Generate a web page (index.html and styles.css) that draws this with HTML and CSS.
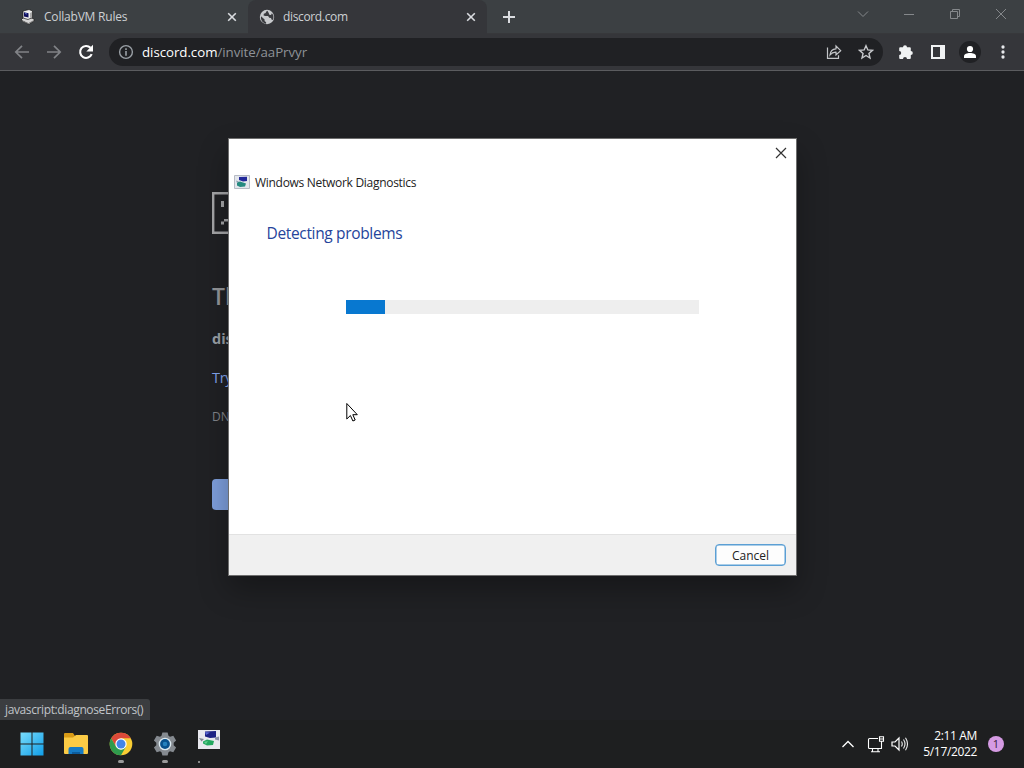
FILE: index.html
```html
<!DOCTYPE html>
<html lang="en">
<head>
<meta charset="utf-8">
<title>discord.com</title>
<link rel="stylesheet" href="styles.css">
</head>
<body>
<div class="desktop">
  <header class="tabstrip">
    <div class="tab tab-rules">
      <svg class="favicon" width="16" height="16" viewBox="0 0 16 16"><path d="M1 11l3-3 8 1 3 2-6 4.500z" fill="#d5d5d5" stroke="#111" stroke-width=".7"/><path d="M2.500 12l6 2.500L14 11.500" fill="none" stroke="#777"/><path d="M3 2l6-1.500L12.500 2v6.500L8 10.500 3 9z" fill="#eee" stroke="#181818" stroke-width=".7"/><path d="M4 3.300l4.500.9v4.300L4 7.500z" fill="#10105c"/><path d="M5 4l2 .5v1L5 5z" fill="#5c6ed0"/><path d="M10 4v5l2-1V3z" fill="#aaa"/></svg>
      <span class="tab-title t-rules">CollabVM Rules</span>
      <svg class="tab-close" width="10" height="10" viewBox="0 0 10 10"><path d="M1.200 1.200l7.600 7.600M8.800 1.200L1.200 8.800" stroke="#dadce0" stroke-width="1.600"/></svg>
    </div>
    <div class="tab tab-active">
      <svg class="favicon" width="16" height="16" viewBox="0 0 16 16"><circle cx="8" cy="8" r="7.200" fill="#c8cacd"/><path d="M2 7.200l3.600 3.400v1.300l1.500 1.300v1.500C3.600 14 1.400 11 2 7.200zM8.400 1.800c-1 .6-1.800 1-1.600 2.200l-2 .8-.2 1.700 1.700.5h2.800l1.100 1.800 1.800.2.500 1.400 1.400.5c1-2.200.8-4.700-1-6.600l-.9 1.600-1.700-.2-.6-1.700z" fill="#3a3b3f"/></svg>
      <span class="tab-title t-discord">discord.com</span>
      <svg class="tab-close" width="10" height="10" viewBox="0 0 10 10"><path d="M1.200 1.200l7.600 7.600M8.800 1.200L1.200 8.800" stroke="#dadce0" stroke-width="1.600"/></svg>
    </div>
    <svg class="new-tab" width="12" height="12" viewBox="0 0 12 12"><path d="M6 0v12M0 6h12" stroke="#dadce0" stroke-width="2"/></svg>
    <div class="caption">
      <svg width="12" height="12" viewBox="0 0 12 12"><path d="M1 3.500l5 5 5-5" fill="none" stroke="#85888b"/></svg>
      <svg width="12" height="12" viewBox="0 0 12 12"><path d="M1 6.500h10" stroke="#85888b"/></svg>
      <svg width="12" height="12" viewBox="0 0 12 12"><path d="M1.500 3.500h7v7h-7zM3.500 3.500v-2h7v7h-2" fill="none" stroke="#85888b"/></svg>
      <svg width="12" height="12" viewBox="0 0 12 12"><path d="M1 1l10 10M11 1L1 11" stroke="#85888b"/></svg>
    </div>
  </header>
  <nav class="toolbar">
    <svg class="nav-icon" width="16" height="16" viewBox="0 0 16 16"><path d="M15 8H2M8 1.800L1.800 8 8 14.200" fill="none" stroke="#818387" stroke-width="1.700"/></svg>
    <svg class="nav-icon" width="16" height="16" viewBox="0 0 16 16"><path d="M1 8h13M8 1.800L14.200 8 8 14.200" fill="none" stroke="#818387" stroke-width="1.700"/></svg>
    <svg class="nav-icon" width="16" height="16" viewBox="0 0 16 16"><path d="M13.700 10.200A6 6 0 1 1 12.500 3.800" fill="none" stroke="#fff" stroke-width="2.100"/><path d="M15 .8v6.700H8.300z" fill="#fff"/></svg>
    <div class="omnibox">
      <svg class="info" width="16" height="16" viewBox="0 0 16 16"><circle cx="8" cy="8" r="6.400" fill="none" stroke="#9aa0a6" stroke-width="1.400"/><path d="M8 4.200v1.700M8 7v4.800" stroke="#9aa0a6" stroke-width="1.600"/></svg>
      <span class="url"><span class="host">discord.com</span><span class="path">/invite/aaPrvyr</span></span>
      <svg class="share" width="16" height="16" viewBox="0 0 16 16"><path d="M1.500 3.500v10.800h11v-3" fill="none" stroke="#c3c5c8" stroke-width="1.200"/><path d="M4 11c.4-4 2.400-6 6-6.200V2l4.700 4.700L10 11V8.200C7.400 8 5.600 9 4 11z" fill="none" stroke="#c3c5c8" stroke-width="1.200"/></svg>
      <svg class="star" width="16" height="16" viewBox="0 0 16 16"><path d="M8 1.700l1.850 4.250 4.600.4-3.500 3.050L12 14 8 11.500 4 14l1.050-4.600-3.500-3.050 4.600-.4z" fill="none" stroke="#c8cacd" stroke-width="1.400"/></svg>
    </div>
    <svg class="puzzle" width="16" height="16" viewBox="0 0 16 16"><path d="M2.200 3.300H5a2 2 0 1 1 4 0h2.800q1 0 1 1v2.800a2 2 0 1 1 0 4v2.900q0 1-1 1H9a2 2 0 1 0-4 0H2.200q-1 0-1-1V11a2 2 0 1 0 0-4V4.300q0-1 1-1z" fill="#f1f3f4"/></svg>
    <svg class="panel" width="14" height="14" viewBox="0 0 14 14"><path fill-rule="evenodd" d="M0 0h14v14H0zM2 2v10h7V2z" fill="#f1f3f4"/></svg>
    <svg class="profile" width="22" height="22" viewBox="0 0 22 22"><circle cx="11" cy="11" r="11" fill="#202124"/><circle cx="11" cy="8" r="3.100" fill="#fff"/><path d="M5 17v-1.800c0-2.200 3-3.200 6-3.200s6 1 6 3.200V17z" fill="#fff"/></svg>
    <svg class="menu" width="4" height="14" viewBox="0 0 4 14"><g fill="#e8eaed"><circle cx="2" cy="2" r="1.650"/><circle cx="2" cy="7" r="1.650"/><circle cx="2" cy="12" r="1.650"/></g></svg>
  </nav>
  <main class="page">
    <div class="error">
      <svg class="sad" width="42" height="42" viewBox="0 0 42 42"><path d="M42 1.200H1.200v39.600H42" fill="none" stroke="#a5a6a8" stroke-width="2.400"/><path d="M9 9h3v6H9zM12 27h5v2.500h-5zM9 29.500h3v3H9z" fill="#a5a6a8"/></svg>
      <h1>Th</h1>
      <p class="host-line">dis</p>
      <p class="try">Try</p>
      <p class="code">DN</p>
      <div class="reload"></div>
    </div>
    <div class="status"><span>javascript:diagnoseErrors()</span></div>
  </main>
  <footer class="taskbar">
    <div class="apps">
      <div class="app"><svg width="24" height="24" viewBox="0 0 24 24"><defs><linearGradient id="win" x1="0" y1="0" x2="1" y2="1"><stop offset="0" stop-color="#79dcfb"/><stop offset="1" stop-color="#109ee8"/></linearGradient></defs><path d="M.5.500h11v11H.5zM12.500.500h11v11h-11zM.5 12.500h11v11H.5zM12.500 12.500h11v11h-11z" fill="url(#win)"/></svg></div>
      <div class="app"><svg width="26" height="24" viewBox="0 0 26 24"><path d="M1 2q0-1 1-1h8l2 3h12q1 0 1 1v5H1z" fill="#d99b16"/><path d="M1 5.500h9l3-2.500h11q1 0 1 1v17q0 1-1 1H2q-1 0-1-1z" fill="#fbcb45"/><path d="M5.500 22v-5q0-2 2-2h11q2 0 2 2v5z" fill="#167bc5"/><path d="M9 22v-2h8v2" fill="#0d5c9c"/></svg></div>
      <div class="app"><svg width="24" height="24" viewBox="0 0 24 24"><circle cx="12" cy="12" r="11.300" fill="#f9cd33"/><path d="M2.200 6.350A11.300 11.300 0 0 1 21.800 6.350H12L7.100 14.800z" fill="#dc4939"/><path d="M2.200 6.350A11.300 11.300 0 0 0 12 23.300L16.900 14.800 12 17.500 7.100 14.800z" fill="#2f9b4d"/><circle cx="12" cy="12" r="5.700" fill="#fff"/><circle cx="12" cy="12" r="4.500" fill="#4285e8"/></svg><i class="pill"></i></div>
      <div class="app"><svg width="24" height="24" viewBox="0 0 24 24"><path d="M8.500 3.800L9.400.500h5.200l.9 3.300 1.500.9 3.300-.9 2.800 4.600-2.400 2.400v2.400l2.400 2.400-2.800 4.600-3.300-.9-1.500.9-.9 3.300H9.400l-.9-3.300-1.500-.9-3.300.9-2.800-4.600 2.400-2.400v-2.400L.9 8.400l2.800-4.600 3.300.9z" fill="#858a90"/><circle cx="12" cy="12" r="6.300" fill="#dce9f0"/><circle cx="12" cy="12" r="4.900" fill="#07518d"/><circle cx="12" cy="12" r="2.300" fill="#2481bd"/></svg><i class="pill"></i></div>
      <div class="app app-diag"><svg width="22" height="19" viewBox="0 0 22 19"><path d="M0 0h22v19H0z" fill="#e8e8ee"/><path d="M7 1.500L18 1v6.500L12 8 7 6.500z" fill="#1d2184"/><path d="M7 2l5 .5L8 5z" fill="#5866cf"/><path d="M17 7.500l4-1v4l-4-1z" fill="#8b90a8"/><path d="M5 11.500l4-2 7 1.500-1 4-6 .5-4-2z" fill="#24a860"/><path d="M6 12l4-1-2 3z" fill="#65cf91"/><path d="M1 8l5 1-2.500 2.500z" fill="#7e858f"/></svg><i class="dot"></i></div>
    </div>
    <div class="tray">
      <svg class="chev" width="14" height="8" viewBox="0 0 14 8"><path d="M1.500 7L7 1.500 12.500 7" fill="none" stroke="#fff" stroke-width="1.300"/></svg>
      <svg class="net" width="18" height="17" viewBox="0 0 18 17"><path d="M11 2.500H2.500q-1 0-1 1v8q0 1 1 1H14.500V6M5.500 12.500v3M11 12.500v3M4 15.700h9M12.500.8h4v4.500h-4zM14.500 5.500v7M13 3h3" fill="none" stroke="#fff" stroke-width="1.100"/></svg>
      <svg class="sound" width="18" height="16" viewBox="0 0 18 16"><path d="M1 6h3l4-4v12l-4-4H1z" fill="none" stroke="#fff" stroke-width="1.200"/><path d="M10.500 5.500q1.500 2.500 0 5M12.500 3.500q3 4.500 0 9M14.500 1.700q4 6.300 0 12.600" fill="none" stroke="#eee" stroke-width="1.100"/></svg>
      <div class="clock"><span class="time">2:11 AM</span><span class="date">5/17/2022</span></div>
      <span class="badge">1</span>
    </div>
  </footer>

  <section class="dialog">
    <div class="dialog-body">
      <svg class="dialog-close" width="12" height="12" viewBox="0 0 12 12"><path d="M1 1l10 10M11 1L1 11" stroke="#333" stroke-width="1.200"/></svg>
      <div class="dialog-title">
        <svg width="16" height="14" viewBox="0 0 16 14"><path d="M.5.500h15v13H.5z" fill="#e3e6ec" stroke="#b6bbc4"/><path d="M5 2l8-.3V6l-4 .5L5 5z" fill="#23299a"/><path d="M3 7.500l3-1 6 2-1 3-5 .5-3-1.500z" fill="#258a80"/><path d="M2 5.500l3 1-2 1.500z" fill="#8aa0b0"/></svg>
        <span>Windows Network Diagnostics</span>
      </div>
      <h2><span>Detecting problems</span></h2>
      <div class="progress"><div class="bar"></div></div>
    </div>
    <div class="dialog-footer"><button class="cancel"><span>Cancel</span></button></div>
  </section>
  <svg class="cursor" width="13" height="20" viewBox="0 0 13 20"><path d="M.8 1.500V17l3.600-3.500L6.900 19l2.300-1-2.400-5.300h4.500z" fill="#fff" stroke="#000" stroke-width="1"/></svg>
</div>
</body>
</html>
```

FILE: styles.css
```css
* { box-sizing: border-box; }
body { margin: 0; background: #202124; font-family: "Open Sans", "Noto Sans", sans-serif; font-size: 12px; }
svg { display: block; flex: none; }
h1, h2, p { margin: 0; }
.desktop { position: relative; width: 1024px; height: 768px; overflow: hidden; display: flex; flex-direction: column; white-space: nowrap; }
.tabstrip { flex: none; height: 34px; background: #3c4043; border-bottom: 1px solid #37383b; display: flex; }
.tab { height: 34px; display: flex; align-items: center; }
.tab-rules { width: 248px; padding: 0 11px 0 20px; }
.tab-active { width: 239px; padding: 0 11px; background: #35363a; border-radius: 8px 8px 0 0; }
.tab-title { margin-left: 8px; flex: 1; color: #cdd0d3; line-height: 18px; }
.t-rules { letter-spacing: -.2px; }
.t-discord { letter-spacing: -.35px; }
.new-tab { margin: 11px 0 0 16px; }
.caption { margin-left: auto; display: flex; gap: 34px; padding: 8px 17px 0 0; }
.toolbar { flex: none; height: 37px; background: #35363a; border-bottom: 1px solid #5b5c5f; display: flex; align-items: center; padding-left: 14px; }
.nav-icon { margin-right: 16px; }
.omnibox { width: 774px; height: 28px; margin-left: -1px; border-radius: 14px; background: #202124; display: flex; align-items: center; padding: 0 9px; }
.url { flex: 1; margin-left: 8px; font-size: 13.300px; line-height: 20px; letter-spacing: -.05px; color: #8e9297; }
.host { color: #fff; }
.star { margin-left: 16px; }
.puzzle { margin-left: 15px; }
.panel { margin-left: 17px; }
.profile { margin-left: 14px; }
.menu { margin-left: 20px; }
.page { flex: 1; position: relative; background: #202124; display: flex; flex-direction: column; justify-content: space-between; align-items: flex-start; }
.error { padding: 121px 0 0 212px; color: #9aa0a6; }
h1 { margin-top: 45px; font-size: 23px; line-height: 34px; font-weight: 600; color: #949699; }
.host-line { margin-top: 15px; font-size: 14.500px; line-height: 22px; font-weight: 700; }
.try { margin-top: 17px; font-size: 14.500px; line-height: 22px; letter-spacing: -.3px; color: #83a7ef; }
.code { margin-top: 19px; font-size: 12px; line-height: 18px; color: #808489; }
.reload { margin-top: 53px; width: 60px; height: 31px; border-radius: 4px; background: #7e9fdc; }
.status { width: 150px; height: 21px; padding-left: 5px; background: #3b3d40; color: #c0c4c8; line-height: 21px; letter-spacing: -.38px; border-top-right-radius: 3px; }
.taskbar { flex: none; height: 48px; background: #1e1f20; display: flex; justify-content: space-between; }
.apps { display: flex; padding-left: 10px; }
.app { width: 44.300px; display: flex; flex-direction: column; align-items: center; padding-top: 12px; }
.app-diag { width: 43px; padding-top: 10px; }
.pill { width: 6px; height: 3px; margin-top: 4px; border-radius: 2px; background: #9a9a9a; }
.dot { width: 2px; height: 2px; margin: 12px 20px 0 0; background: #888; }
.tray { display: flex; align-items: center; padding-right: 20px; color: #fff; }
.net { margin-left: 12px; }
.sound { margin-left: 6px; }
.clock { margin-left: 10px; width: 58px; display: flex; flex-direction: column; align-items: flex-end; line-height: 16px; letter-spacing: -.35px; }
.badge { margin-left: 11px; width: 16px; height: 16px; border-radius: 50%; background: #d59be3; color: #35203b; font-size: 11px; line-height: 16px; text-align: center; }
.dialog { position: absolute; left: 228px; top: 138px; width: 569px; height: 438px; background: #fff; border: 1px solid #6e6e6e; box-shadow: 0 14px 28px rgba(0,0,0,.3); display: flex; flex-direction: column; }
.dialog-body { flex: 1; }
.dialog-close { margin: 8px 9px 0 auto; }
.dialog-title { display: flex; align-items: center; height: 20px; margin: 13px 0 0 5px; gap: 5px; color: #222; letter-spacing: -.29px; }
h2 { margin: 29px 0 0 37.500px; font-size: 15.500px; line-height: 24px; font-weight: 400; letter-spacing: -.34px; color: #25449b; }
.progress { width: 353px; height: 14px; margin: 55px 0 0 117px; background: #eee; }
.bar { width: 39px; height: 14px; background: #0878d0; }
.dialog-footer { height: 41px; background: #f0f0f0; border-top: 1px solid #e2e2e2; display: flex; justify-content: flex-end; padding: 9px 10px 0 0; }
.cancel { width: 71px; height: 22px; padding: 1px 0 0; border: 1.500px solid #5b9fd4; border-radius: 4px; background: #fdfdfd; color: #222; font: 12px/19px "Open Sans", sans-serif; box-shadow: inset 0 0 0 .5px #5b9fd4; }
.cursor { position: absolute; left: 346px; top: 402px; }
```
